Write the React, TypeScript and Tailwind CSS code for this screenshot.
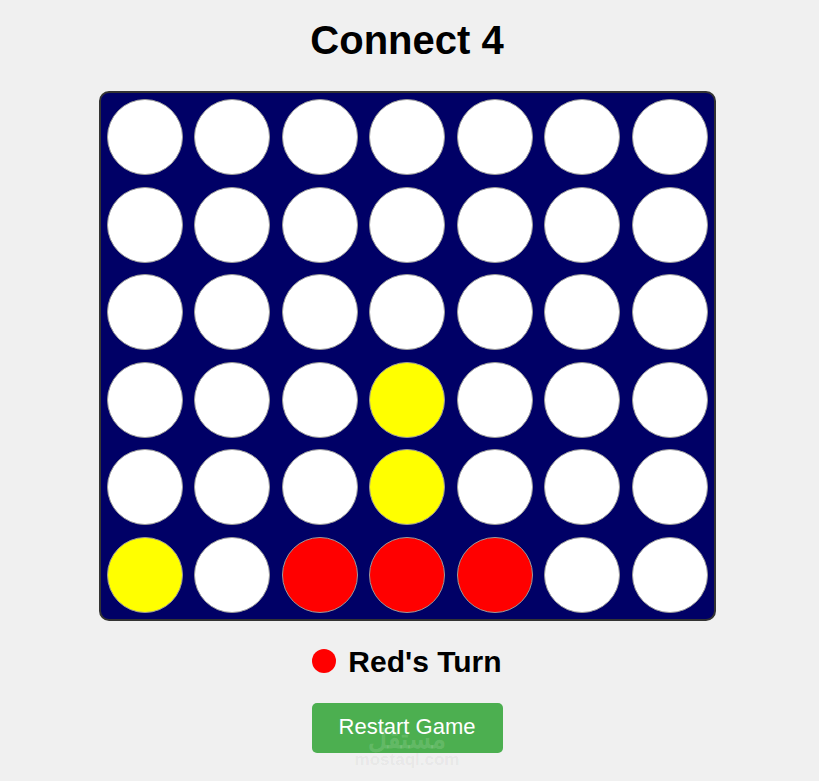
import React, { useState } from 'react';

type Cell = 'empty' | 'red' | 'yellow';

const ROWS = 6;
const COLS = 7;

const initialBoard = (): Cell[][] => {
  const b: Cell[][] = Array.from({ length: ROWS }, () => Array(COLS).fill('empty'));
  b[3][3] = 'yellow';
  b[4][3] = 'yellow';
  b[5][0] = 'yellow';
  b[5][2] = 'red';
  b[5][3] = 'red';
  b[5][4] = 'red';
  return b;
};

const cellColor = (c: Cell) => {
  switch (c) {
    case 'red': return 'bg-[#ff0000]';
    case 'yellow': return 'bg-[#ffff00]';
    default: return 'bg-white';
  }
};

const App: React.FC = () => {
  const [board, setBoard] = useState<Cell[][]>(initialBoard);
  const [turn, setTurn] = useState<'red' | 'yellow'>('red');

  const drop = (col: number) => {
    for (let r = ROWS - 1; r >= 0; r--) {
      if (board[r][col] === 'empty') {
        const next = board.map(row => [...row]);
        next[r][col] = turn;
        setBoard(next);
        setTurn(turn === 'red' ? 'yellow' : 'red');
        return;
      }
    }
  };

  const restart = () => {
    setBoard(Array.from({ length: ROWS }, () => Array(COLS).fill('empty')));
    setTurn('red');
  };

  return (
    <div className="min-h-screen bg-[#f0f0f0] flex flex-col items-center pr-[5px] font-['Liberation_Sans',Arial,sans-serif] text-black">
      <h1 className="pt-[17px] mb-[28px] text-[40px] leading-[46px] font-bold">Connect 4</h1>

      {/* Board */}
      <div className="grid grid-cols-[repeat(7,76px)] grid-rows-[repeat(6,76px)] gap-[11.5px] p-[6px] bg-[#000066] border-2 border-[#333] rounded-[10px]">
        {board.map((row, r) =>
          row.map((cell, c) => (
            <div
              key={`${r}-${c}`}
              onClick={() => drop(c)}
              className={`w-[76px] h-[76px] rounded-full border border-[#999] cursor-pointer ${cellColor(cell)}`}
            />
          ))
        )}
      </div>

      {/* Turn indicator */}
      <div className="mt-[24px] flex items-center gap-[12px] h-[33px]">
        <span className={`w-6 h-6 rounded-full ${turn === 'red' ? 'bg-[#ff0000]' : 'bg-[#ffff00]'}`} />
        <span className="text-[30px] leading-[33px] font-bold">{turn === 'red' ? "Red's Turn" : "Yellow's Turn"}</span>
      </div>

      {/* Restart */}
      <div className="relative mt-[25px]">
        <button
          onClick={restart}
          className="w-[191px] h-[50px] pb-[3px] bg-[#4caf50] text-white text-[22px] rounded-[5px] cursor-pointer"
        >
          Restart Game
        </button>
        {/* watermark */}
        <div className="absolute left-0 right-0 top-[22px] flex flex-col items-center pointer-events-none select-none">
          <span className="text-[26px] leading-[26px] font-bold text-white/15 font-['Noto_Sans',sans-serif]">مستقل</span>
          <span className="text-[17px] leading-[18px] font-bold text-[#000]/[0.05]">mostaql.com</span>
        </div>
      </div>
    </div>
  );
};

export default App;
